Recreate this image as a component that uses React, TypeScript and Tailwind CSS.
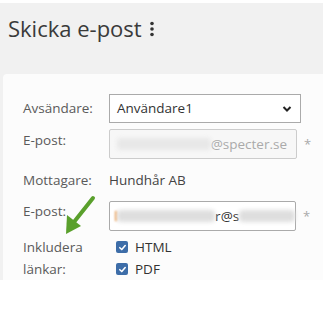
import React from "react";

function Blur({ w, c = "bg-[#dedede]" }: { w: string; c?: string }) {
  return <span className={`inline-block h-[12px] rounded-sm blur-[2px] ${c} ${w}`} />;
}

function Check({ label }: { label: string }) {
  return (
    <div className="flex items-center h-[22px]">
      <span className="w-[12px] h-[12px] rounded-[2px] bg-[#3d6da8] flex items-center justify-center ml-[7px]">
        <svg width="9" height="9" viewBox="0 0 10 10">
          <path d="M2 5.2 L4.2 7.3 L8 2.8" stroke="white" strokeWidth="1.7" fill="none" strokeLinecap="round" strokeLinejoin="round" />
        </svg>
      </span>
      <span className="ml-[7px] text-[#333]">{label}</span>
    </div>
  );
}

export default function App() {
  return (
    <div className="w-[323px] h-[314px] bg-white overflow-hidden" style={{ fontFamily: '"Open Sans", sans-serif' }}>
      <div className="mt-[3px] h-[277px] bg-[#f1f1f1] flex flex-col">
        <div className="flex pl-[8px] pt-[10px] h-[71px] items-start">
          <h1 className="text-[22px] leading-[30px] text-[#3a3a3a]">Skicka e-post</h1>
          <svg width="6" height="16" viewBox="0 0 6 16" className="ml-[7px] mt-[8px]">
            <circle cx="3" cy="2.5" r="1.8" fill="#333" />
            <circle cx="3" cy="8" r="1.8" fill="#333" />
            <circle cx="3" cy="13.5" r="1.8" fill="#333" />
          </svg>
        </div>
        <div className="flex-1 ml-[3px] bg-[#fcfcfc] rounded-tl-[4px] pl-[20px] pt-[20px] text-[13.5px] text-[#5a5a5a]">
          <div className="flex items-center h-[29px]">
            <div className="w-[86px]">Avsändare:</div>
            <div className="w-[192px] h-[29px] border border-[#aaa] bg-white flex items-center pl-[7px] pr-[8px] text-[#333]">
              <span className="flex-1">Användare1</span>
              <svg width="10" height="8" viewBox="0 0 10 8">
                <path d="M1.5 2 L5 5.5 L8.5 2" stroke="#222" strokeWidth="2" fill="none" />
              </svg>
            </div>
          </div>
          <div className="flex mt-[6px] h-[30px]">
            <div className="w-[86px] pt-[1px]">E-post:</div>
            <div className="w-[188px] h-[30px] border border-[#ccc] rounded-[2px] bg-[#f7f7f7] flex items-center pl-[7px] pr-[9px] text-[#aaa]">
              <Blur w="w-[106px]" c="bg-[#e8e8e8]" />
              <span>@specter.se</span>
            </div>
            <span className="ml-[7px] mt-[6px] text-[#aaa] text-[13px]">*</span>
          </div>
          <div className="flex items-center h-[28px] mt-[7px]">
            <div className="w-[86px]">Mottagare:</div>
            <div className="text-[#444]">Hundhår AB</div>
          </div>
          <div className="flex mt-[7px] h-[30px]">
            <div className="w-[86px]">E-post:</div>
            <div className="w-[187px] h-[30px] border border-[#aaa] rounded-[2px] bg-white flex items-center pl-[5px] text-[#333]">
              <span className="inline-block w-[2px] h-[10px] bg-[#f0a050] blur-[1px]" />
              <Blur w="w-[102px]" />
              <span>r@s</span>
              <Blur w="w-[58px]" />
            </div>
            <span className="ml-[7px] mt-[6px] text-[#aaa] text-[13px]">*</span>
          </div>
          <div className="flex mt-[4px]">
            <div className="w-[86px] leading-[22px] pt-[1px]">
              Inkludera
              <br />
              länkar:
            </div>
            <div className="flex flex-col pt-[1px]">
              <Check label="HTML" />
              <Check label="PDF" />
            </div>
          </div>
        </div>
      </div>
      <svg className="absolute" style={{ left: 0, top: 0 }} width="323" height="314">
        <line x1="93" y1="198" x2="74" y2="222" stroke="#5aa02c" strokeWidth="4" strokeLinecap="round" />
        <polygon points="66,234 67,215 81,226" fill="#5aa02c" />
      </svg>
    </div>
  );
}
